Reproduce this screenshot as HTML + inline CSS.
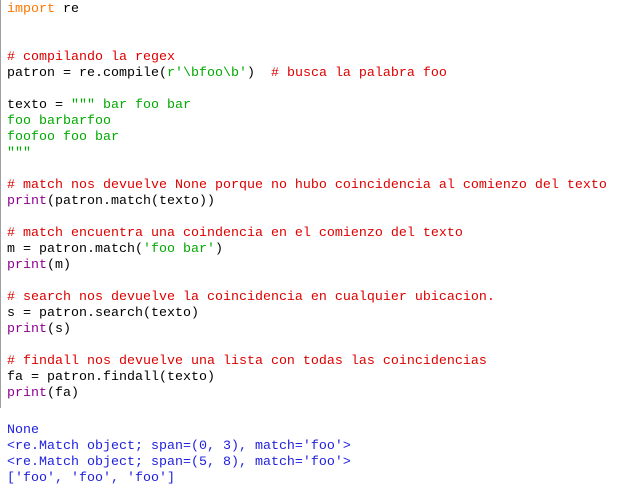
<!DOCTYPE html>
<html><head><style>
html,body{margin:0;padding:0;background:#fff;width:623px;height:487px;overflow:hidden;position:relative}
.b{position:absolute;left:0;top:0;width:1px;height:408px;background:#a0a0a0}
pre{position:absolute;left:7px;margin:0;font-family:"Liberation Mono","Courier New",monospace;font-size:13.33px;line-height:16px;color:#000}
.k{color:#ff7700}.c{color:#dd0000}.s{color:#00aa00}.p{color:#900090}.o{color:#2020e0}
</style></head><body>
<div class="b"></div>
<pre style="top:2px"><span class="k">import</span> re


<span class="c"># compilando la regex</span>
patron = re.compile(<span class="s">r'\bfoo\b'</span>)  <span class="c"># busca la palabra foo</span>

texto = <span class="s">""" bar foo bar
foo barbarfoo
foofoo foo bar
"""</span>

<span class="c"># match nos devuelve None porque no hubo coincidencia al comienzo del texto</span>
<span class="p">print</span>(patron.match(texto))

<span class="c"># match encuentra una coindencia en el comienzo del texto</span>
m = patron.match(<span class="s">'foo bar'</span>)
<span class="p">print</span>(m)

<span class="c"># search nos devuelve la coincidencia en cualquier ubicacion.</span>
s = patron.search(texto)
<span class="p">print</span>(s)

<span class="c"># findall nos devuelve una lista con todas las coincidencias</span>
fa = patron.findall(texto)
<span class="p">print</span>(fa)</pre>
<pre class="o" style="top:423px">None
&lt;re.Match object; span=(0, 3), match='foo'&gt;
&lt;re.Match object; span=(5, 8), match='foo'&gt;
['foo', 'foo', 'foo']</pre>
</body></html>
